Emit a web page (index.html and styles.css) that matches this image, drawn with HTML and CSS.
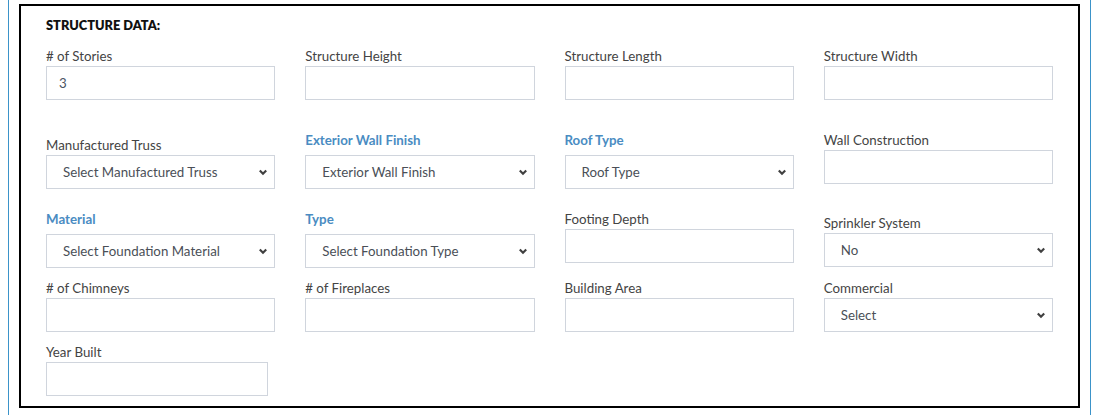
FILE: index.html
```html
<!DOCTYPE html>
<html lang="en">
<head>
<meta charset="utf-8">
<title>Structure Data</title>
<link rel="stylesheet" href="styles.css">
</head>
<body>
<div class="wrap">
  <div class="box">
    <h3 class="title">STRUCTURE DATA:</h3>

    <div class="row row-1">
      <div class="field">
        <label class="lbl">&#35; of Stories</label>
        <input class="ctl" type="text" value="3">
      </div>
      <div class="field">
        <label class="lbl">Structure Height</label>
        <input class="ctl" type="text">
      </div>
      <div class="field">
        <label class="lbl">Structure Length</label>
        <input class="ctl" type="text">
      </div>
      <div class="field">
        <label class="lbl">Structure Width</label>
        <input class="ctl" type="text">
      </div>
    </div>

    <div class="row row-2">
      <div class="field">
        <label class="lbl lbl-offset">Manufactured Truss</label>
        <select class="ctl sel"><option>Select Manufactured Truss</option></select>
      </div>
      <div class="field">
        <label class="lbl lbl-req">Exterior Wall Finish</label>
        <select class="ctl sel"><option>Exterior Wall Finish</option></select>
      </div>
      <div class="field">
        <label class="lbl lbl-req">Roof Type</label>
        <select class="ctl sel"><option>Roof Type</option></select>
      </div>
      <div class="field">
        <label class="lbl">Wall Construction</label>
        <input class="ctl" type="text">
      </div>
    </div>

    <div class="row row-3">
      <div class="field">
        <label class="lbl lbl-req">Material</label>
        <select class="ctl sel"><option>Select Foundation Material</option></select>
      </div>
      <div class="field">
        <label class="lbl lbl-req">Type</label>
        <select class="ctl sel"><option>Select Foundation Type</option></select>
      </div>
      <div class="field">
        <label class="lbl">Footing Depth</label>
        <input class="ctl" type="text">
      </div>
      <div class="field">
        <label class="lbl lbl-offset-sm">Sprinkler System</label>
        <select class="ctl sel"><option>No</option></select>
      </div>
    </div>

    <div class="row row-4">
      <div class="field">
        <label class="lbl">&#35; of Chimneys</label>
        <input class="ctl" type="text">
      </div>
      <div class="field">
        <label class="lbl">&#35; of Fireplaces</label>
        <input class="ctl" type="text">
      </div>
      <div class="field">
        <label class="lbl">Building Area</label>
        <input class="ctl" type="text">
      </div>
      <div class="field">
        <label class="lbl">Commercial</label>
        <select class="ctl sel"><option>Select</option></select>
      </div>
    </div>

    <div class="row row-4">
      <div class="field">
        <label class="lbl">Year Built</label>
        <input class="ctl ctl-narrow" type="text">
      </div>
    </div>
  </div>
</div>
</body>
</html>
```

FILE: styles.css
```css
html, body {
  margin: 0;
  padding: 0;
  background: #ffffff;
}

body {
  margin: 0 8px;
  font-family: Lato, "Liberation Sans", sans-serif;
  font-size: 14px;
  color: #444444;
}

.wrap {
  border-left: 1px solid #3b93c9;
  border-right: 1px solid #3b93c9;
  padding: 4px 10px 0 10px;
  height: 415px;
  box-sizing: border-box;
}

.box {
  border: 2px solid #000000;
  padding: 9px 25px 10px 25px;
}

.title {
  margin: 0 0 11px 0;
  font-size: 12.8px;
  line-height: 20px;
  font-weight: 800;
  color: #111111;
}

.row {
  display: grid;
  grid-template-columns: repeat(4, 1fr);
  column-gap: 30px;
  align-items: start;
}

.row-2 { margin-top: 30px; }
.row-3 { margin-top: 20px; }
.row-4 { margin-top: 10px; }

.field {
  display: flex;
  flex-direction: column;
  min-width: 0;
}

.lbl {
  display: block;
  line-height: 20px;
  font-size: 13.3px;
  color: #444444;
}

.lbl-req {
  color: #4a8cc2;
  font-weight: 700;
  margin-bottom: 5px;
}

.lbl-offset { margin-top: 5px; }
.lbl-offset-sm { margin-top: 4px; }

.ctl {
  box-sizing: border-box;
  height: 34px;
  width: 100%;
  margin: 0;
  border: 1px solid #d0d5dd;
  border-radius: 0;
  background: #ffffff;
  font-family: Lato, "Liberation Sans", sans-serif;
  font-size: 13.3px;
  color: #4b5563;
  padding: 0 12px;
  outline: none;
}

.ctl-narrow {
  width: 222px;
}

.sel {
  -webkit-appearance: none;
  appearance: none;
  padding: 0 30px 0 16px;
  color: #4a4f57;
  background-image: url("data:image/svg+xml,%3Csvg xmlns='http://www.w3.org/2000/svg' width='10' height='8' viewBox='0 0 10 8'%3E%3Cpath d='M1.8 2.5 L5 5.7 L8.2 2.5' fill='none' stroke='%23404040' stroke-width='2.2'/%3E%3C/svg%3E");
  background-repeat: no-repeat;
  background-position: right 6px center;
  background-size: 10px 8px;
}
```
